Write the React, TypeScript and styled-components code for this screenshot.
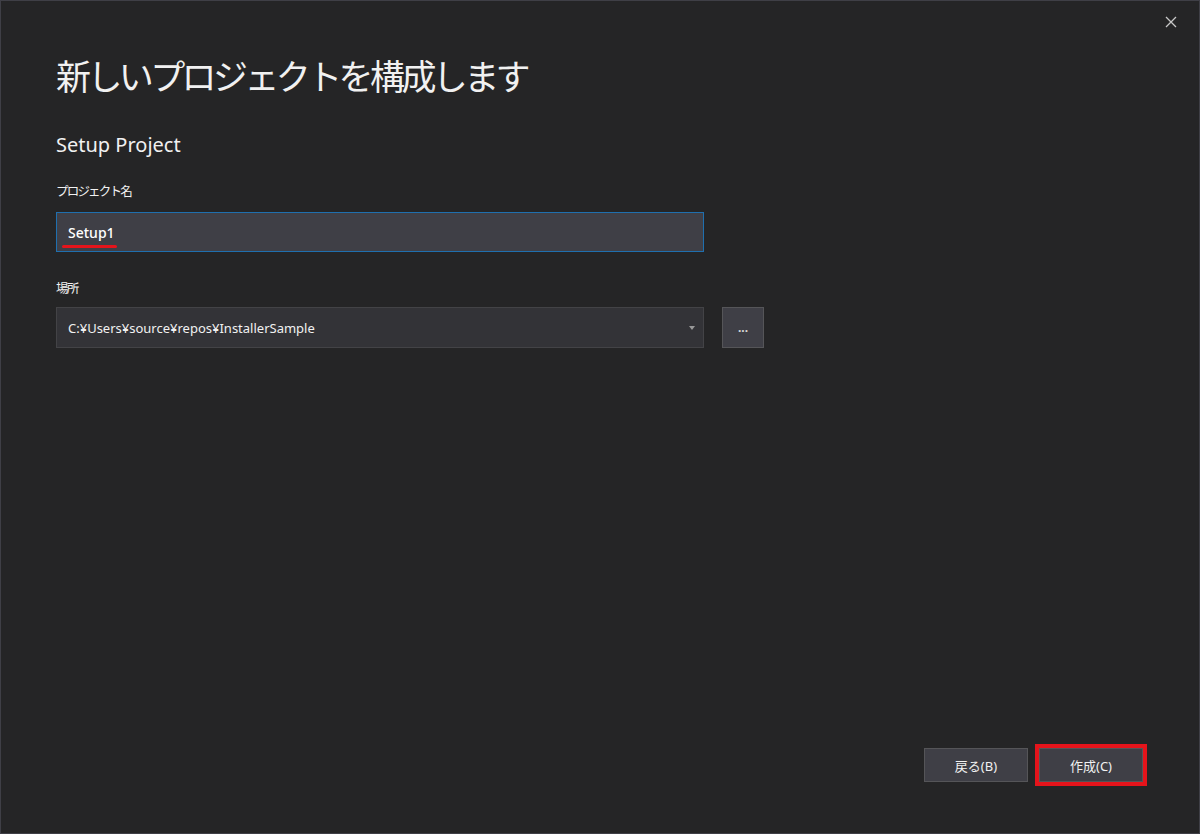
import React from 'react';
import styled, { createGlobalStyle } from 'styled-components';

const GlobalStyle = createGlobalStyle`
    html, body {
        margin: 0;
        padding: 0;
        background: #252526;
    }
    * {
        box-sizing: border-box;
    }
`;

const FONT = `"Noto Sans", "Noto Sans CJK JP", sans-serif`;

const Window = styled.div`
    position: relative;
    width: 1200px;
    height: 834px;
    background: #252526;
    border: 1px solid #3f3f46;
    color: #f1f1f1;
    font-family: ${FONT};
    display: flex;
    flex-direction: column;
    padding: 52px 56px 51px 55px;
`;

const CloseButton = styled.button`
    position: absolute;
    top: 13px;
    right: 20px;
    width: 16px;
    height: 16px;
    padding: 0;
    border: none;
    background: transparent;
    display: flex;
    align-items: center;
    justify-content: center;
    cursor: pointer;
`;

const Title = styled.h1`
    margin: 0;
    font-size: 35px;
    line-height: 48px;
    font-weight: 400;
    letter-spacing: -3.6px;
    color: #f1f1f1;
`;

const SubTitle = styled.h2`
    margin: 30px 0 0;
    font-size: 20px;
    line-height: 28px;
    font-weight: 400;
    color: #f1f1f1;
`;

const Label = styled.label<{ $top: number }>`
    display: block;
    margin-top: ${p => p.$top}px;
    font-size: 12.5px;
    line-height: 18px;
    letter-spacing: -1.8px;
    color: #f1f1f1;
`;

const Row = styled.div<{ $top: number }>`
    display: flex;
    align-items: stretch;
    gap: 18px;
    margin-top: ${p => p.$top}px;
`;

const TextBox = styled.div`
    width: 648px;
    height: 40px;
    background: #3f3f46;
    border: 1px solid #1f6fae;
    display: flex;
    align-items: center;
    padding-left: 11px;
    font-size: 14px;
    font-weight: 500;
    color: #ffffff;
`;

const Marker = styled.span`
    position: relative;
    display: inline-block;

    &::after {
        content: '';
        position: absolute;
        left: -6px;
        right: -2px;
        bottom: -6px;
        height: 3px;
        border-radius: 2px;
        background: #e5141b;
    }
`;

const Combo = styled.div`
    width: 648px;
    height: 41px;
    background: #333337;
    border: 1px solid #434346;
    display: flex;
    align-items: center;
    justify-content: space-between;
    padding: 0 8px 0 11px;
    font-size: 13px;
    color: #f1f1f1;
`;

const Arrow = styled.span`
    width: 0;
    height: 0;
    border-left: 3px solid transparent;
    border-right: 3px solid transparent;
    border-top: 4px solid #999999;
`;

const BrowseButton = styled.button`
    width: 42px;
    height: 41px;
    background: #3f3f46;
    border: 1px solid #555558;
    color: #d8d8d8;
    font-family: ${FONT};
    font-size: 12px;
    font-weight: 700;
    padding: 0;
    line-height: 1;
`;

const Spacer = styled.div`
    flex: 1;
`;

const Footer = styled.div`
    display: flex;
    justify-content: flex-end;
    gap: 11px;
`;

const ActionButton = styled.button<{ $marked?: boolean }>`
    width: 104px;
    height: 34px;
    background: #3f3f46;
    border: 1px solid #555558;
    color: #f1f1f1;
    font-family: ${FONT};
    font-size: 13px;
    padding: 0;
    outline: ${p => (p.$marked ? '4px solid #e5141b' : 'none')};
    outline-offset: 0;
`;

const App = () => {
    return (
        <>
            <GlobalStyle />
            <Window>
                <CloseButton aria-label="close">
                    <svg width="12" height="12" viewBox="0 0 12 12">
                        <path d="M1 1 L11 11 M11 1 L1 11" stroke="#c8c8c8" strokeWidth="1.3" />
                    </svg>
                </CloseButton>
                <Title>新しいプロジェクトを構成します</Title>
                <SubTitle>Setup Project</SubTitle>
                <Label $top={24}>プロジェクト名</Label>
                <Row $top={11}>
                    <TextBox>
                        <Marker>Setup1</Marker>
                    </TextBox>
                </Row>
                <Label $top={28}>場所</Label>
                <Row $top={9}>
                    <Combo>
                        <span>C:¥Users¥source¥repos¥InstallerSample</span>
                        <Arrow />
                    </Combo>
                    <BrowseButton>...</BrowseButton>
                </Row>
                <Spacer />
                <Footer>
                    <ActionButton>戻る(B)</ActionButton>
                    <ActionButton $marked>作成(C)</ActionButton>
                </Footer>
            </Window>
        </>
    );
};

export default App;
